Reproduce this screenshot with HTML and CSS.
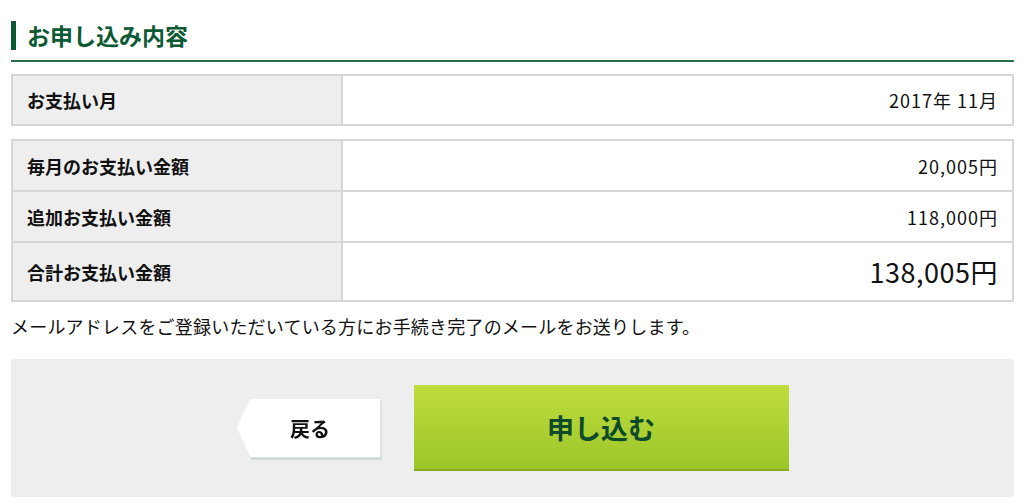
FILE: index.html
```html
<!DOCTYPE html>
<html lang="ja">
<head>
    <meta charset="UTF-8">
    <meta name="viewport" content="width=device-width, initial-scale=1.0">
    <title>お申し込み内容</title>
    <link rel="stylesheet" href="styles.css">
</head>
<body>
    <div class="container">
        <div class="heading">
            <h1>お申し込み内容</h1>
        </div>

        <table class="summary first">
            <tr>
                <th>お支払い月</th>
                <td>2017年 11月</td>
            </tr>
        </table>

        <table class="summary">
            <tr>
                <th>毎月のお支払い金額</th>
                <td>20,005円</td>
            </tr>
            <tr>
                <th>追加お支払い金額</th>
                <td>118,000円</td>
            </tr>
            <tr class="total">
                <th>合計お支払い金額</th>
                <td>138,005円</td>
            </tr>
        </table>

        <p class="note">メールアドレスをご登録いただいている方にお手続き完了のメールをお送りします。</p>

        <div class="actions">
            <div class="back-wrap">
                <a class="back" href="#">戻る</a>
            </div>
            <button class="submit">申し込む</button>
        </div>
    </div>
</body>
</html>
```

FILE: styles.css
```css
body {
    font-family: "Noto Sans CJK JP", "Noto Sans", sans-serif;
    margin: 0;
    padding: 0;
    background-color: #fff;
    color: #111;
}
.container {
    width: 1003px;
    margin-left: 11px;
}
.heading {
    padding-top: 21px;
    padding-bottom: 10px;
    border-bottom: 2px solid #2a6e49;
}
.heading h1 {
    margin: 0;
    height: 29px;
    line-height: 29px;
    padding-left: 11px;
    border-left: 5px solid #0c5a34;
    font-size: 23px;
    font-weight: bold;
    color: #0c5a34;
}
.summary {
    width: 100%;
    border-collapse: collapse;
    border: 2px solid #d6d6d6;
    margin-top: 13px;
}
.summary.first {
    margin-top: 12px;
}
.summary th,
.summary td {
    border: 2px solid #d6d6d6;
    height: 49px;
    padding: 0 14px;
    font-size: 18px;
    line-height: 24px;
}
.summary.first th,
.summary.first td {
    height: 48px;
}
.summary th {
    width: 300px;
    background-color: #eee;
    text-align: left;
    font-weight: bold;
}
.summary td {
    text-align: right;
    letter-spacing: 1px;
}
.summary .total th,
.summary .total td {
    height: 57px;
}
.summary .total td {
    font-size: 27px;
    letter-spacing: 0.5px;
}
.note {
    margin: 12px 0 0;
    font-size: 18px;
    line-height: 24px;
    letter-spacing: 0.2px;
    height: 45px;
}
.actions {
    display: flex;
    justify-content: center;
    align-items: center;
    gap: 33px;
    padding: 26px 0;
    background-color: #eee;
}
.back-wrap {
    filter: drop-shadow(1px 2px 0 #c3d1cd);
}
.back {
    display: block;
    width: 144px;
    height: 59px;
    line-height: 59px;
    padding-left: 3px;
    box-sizing: border-box;
    text-align: center;
    background-color: #fff;
    color: #111;
    font-size: 20px;
    font-weight: bold;
    text-decoration: none;
    clip-path: polygon(14px 0, 100% 0, 100% 100%, 14px 100%, 0 50%);
}
.submit {
    width: 375px;
    height: 86px;
    border: none;
    border-bottom: 2px solid #88ad1e;
    background: linear-gradient(#bfdd3c, #9cc52a);
    color: #0c4a2a;
    font-family: inherit;
    font-size: 27px;
    font-weight: bold;
    cursor: pointer;
}
```
